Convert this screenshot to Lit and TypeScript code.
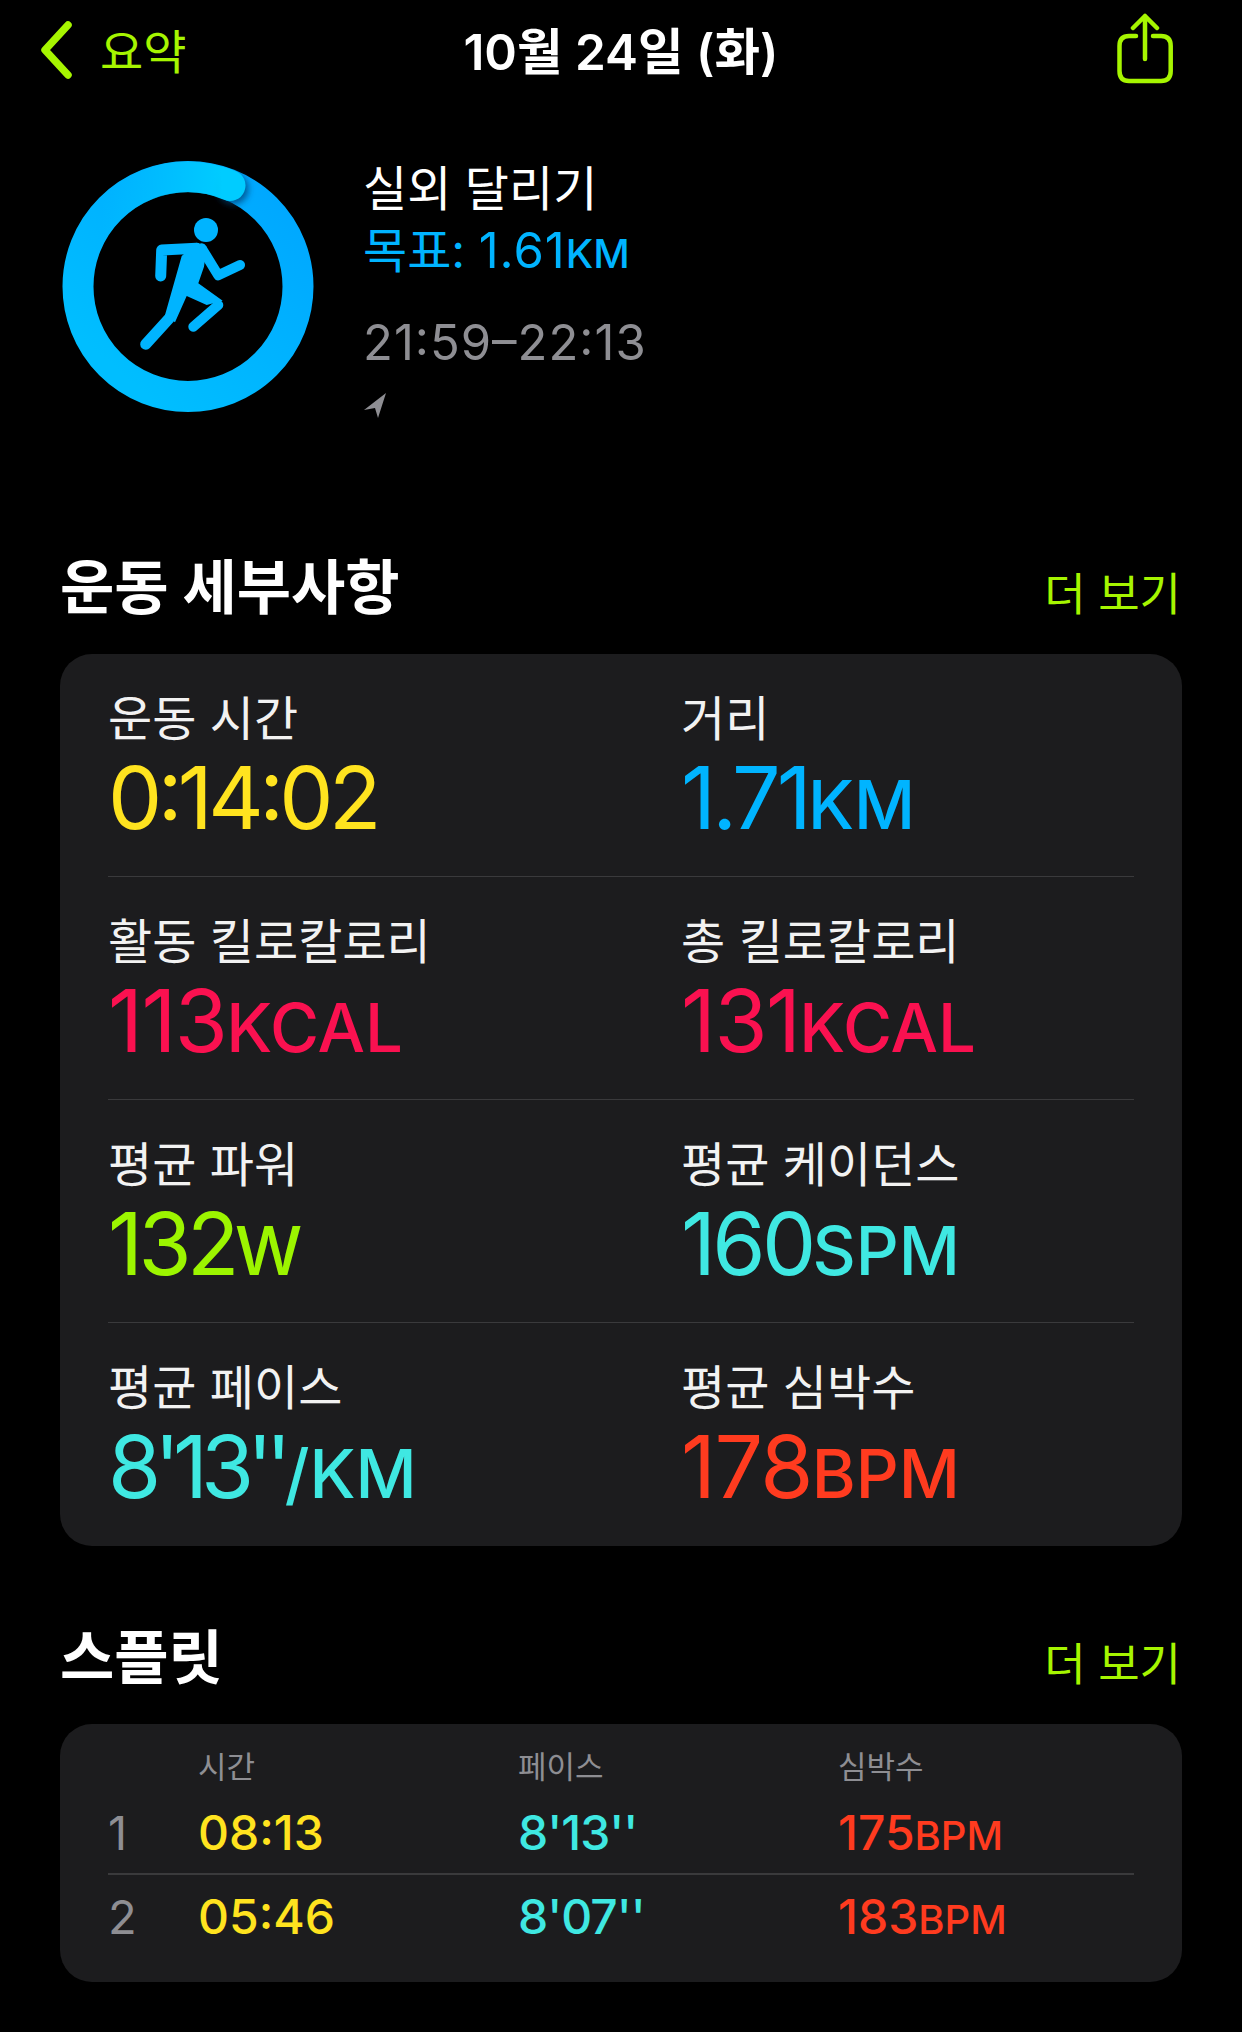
import { LitElement, html, css, svg, unsafeCSS } from 'lit';
import { customElement } from 'lit/decorators.js';

const LIME = unsafeCSS('#a6f500');
const BLUE = '#00b4ff';
const YELLOW = '#ffe31f';
const PINK = '#fa1150';
const GREEN = '#9cf500';
const CYAN = '#3fe8e2';
const RED = '#ff3b1f';

const metrics = [
  { label: '운동 시간', value: '0:14:02', unit: '', color: YELLOW, track: -4.6 },
  { label: '거리', value: '1.71', unit: 'KM', color: BLUE, track: -3.8 },
  { label: '활동 킬로칼로리', value: '113', unit: 'KCAL', color: PINK, track: -1.6 },
  { label: '총 킬로칼로리', value: '131', unit: 'KCAL', color: PINK, track: -1.6 },
  { label: '평균 파워', value: '132', unit: 'W', color: GREEN, track: -4.5 },
  { label: '평균 케이던스', value: '160', unit: 'SPM', color: CYAN, track: -3.7 },
  { label: '평균 페이스', value: `8'13''`, unit: '/KM', color: CYAN, track: -7 },
  { label: '평균 심박수', value: '178', unit: 'BPM', color: RED, track: -1.6 },
];

const splits = [
  { n: '1', time: '08:13', pace: `8'13''`, bpm: '175' },
  { n: '2', time: '05:46', pace: `8'07''`, bpm: '183' },
];

const ring = svg`
  <defs>
    <linearGradient id="ringGrad" x1="0.9" y1="0.1" x2="0.2" y2="0.9">
      <stop offset="0" stop-color="#00a8ff" />
      <stop offset="1" stop-color="#00beff" />
    </linearGradient>
    <linearGradient id="capGrad" gradientUnits="userSpaceOnUse" x1="40" y1="0" x2="160" y2="0">
      <stop offset="0" stop-color="#00ccff" stop-opacity="0" />
      <stop offset="1" stop-color="#00ccff" stop-opacity="1" />
    </linearGradient>
    <filter id="capShadow" x="-50%" y="-50%" width="200%" height="200%">
      <feGaussianBlur stdDeviation="3" />
    </filter>
  </defs>
  <circle cx="126" cy="125.5" r="110" fill="none" stroke="url(#ringGrad)" stroke-width="31" />
  <circle cx="171" cy="28" r="15.5" fill="#003a70" fill-opacity="0.7" filter="url(#capShadow)" />
  <path d="M31 70 A110 110 0 0 1 168 24.5" fill="none" stroke="url(#capGrad)" stroke-width="31" stroke-linecap="round" />
  <circle cx="144" cy="69" r="12" fill="${BLUE}" />
  <path fill="${BLUE}" d="M119.7 95 L103 154 L113 161.3 L124.7 135 L144.7 144 L160.7 139.7 L136.3 122.3 L142 105.7 L144.7 85.7 L134.7 81.7 Z" />
  <g fill="none" stroke="${BLUE}" stroke-linecap="round" stroke-linejoin="round">
    <path d="M134.7 87.3 L99.7 89 L98.7 115" stroke-width="11" />
    <path d="M139.7 87.3 L156.3 114.3 L178 104" stroke-width="10" />
    <path d="M156.3 144 L131.3 165.7" stroke-width="10" />
    <path d="M107.3 157.3 L83.7 183.3" stroke-width="11" />
  </g>
`;

@customElement('app-root')
export class AppRoot extends LitElement {
  static styles = css`
    :host {
      display: block;
      width: 1242px;
      height: 2032px;
      background: #000;
      color: #fff;
      font-family: Inter, 'Noto Sans CJK KR', sans-serif;
      overflow: hidden;
    }
    .nav {
      display: flex;
      align-items: center;
      height: 100px;
      padding: 0 40px;
    }
    .back {
      display: flex;
      align-items: center;
      gap: 27px;
      flex: 1;
      color: ${LIME};
      font-size: 47px;
    }
    .back span {
      margin-top: -4px;
    }
    .nav-title {
      font-size: 49.5px;
      font-weight: 600;
      margin-top: -4px;
    }
    .share {
      flex: 1;
      display: flex;
      justify-content: flex-end;
    }
    .share svg {
      margin-right: 29px;
    }
    .summary {
      display: flex;
      gap: 49px;
      padding: 61px 0 0 62px;
      height: 437px;
      box-sizing: border-box;
    }
    .summary-text {
      display: flex;
      flex-direction: column;
    }
    .activity {
      font-size: 48px;
      line-height: 62px;
      margin-top: -3px;
    }
    .goal {
      font-size: 48px;
      line-height: 62px;
      color: ${unsafeCSS(BLUE)};
    }
    .goal .num {
      font-size: 49px;
      letter-spacing: 1px;
    }
    .goal small {
      font-size: 40px;
      font-weight: 500;
      letter-spacing: 0;
    }
    .clock {
      font-size: 49px;
      line-height: 62px;
      letter-spacing: 1px;
      font-feature-settings: 'case';
      color: #8e8e93;
      margin-top: 27px;
    }
    .loc {
      margin-top: 18px;
    }
    .section-head {
      display: flex;
      justify-content: space-between;
      align-items: center;
      padding: 0 61px 0 60px;
      height: 100px;
      margin-bottom: 17px;
    }
    .section-head h2 {
      margin: 0 0 8px;
      font-size: 59px;
      font-weight: 700;
    }
    .section-head a {
      color: ${LIME};
      font-size: 45px;
      margin-top: 9px;
    }
    .card {
      margin: 0 60px;
      background: #1c1c1e;
      border-radius: 32px;
      padding: 0 48px;
    }
    .metrics {
      display: grid;
      grid-template-columns: 573px 1fr;
    }
    .metric {
      height: 223px;
      box-sizing: border-box;
      padding-top: 35px;
      border-bottom: 1.5px solid #3a3a3c;
    }
    .metric:nth-last-child(-n + 2) {
      border-bottom: none;
    }
    .metric .label {
      font-size: 48px;
      line-height: 60px;
      color: #f2f2f2;
    }
    .metric .value {
      font-size: 86px;
      line-height: 98px;
      font-feature-settings: 'case';
    }
    .metric .unit {
      font-size: 67px;
      font-weight: 500;
    }
    .gap {
      height: 61px;
    }
    .splits {
      display: grid;
      grid-template-columns: 90px 320px 320px 1fr;
      grid-template-rows: 68px 81px 1.5px 83px;
      padding-bottom: 24px;
    }
    .splits .hdr {
      font-size: 31px;
      line-height: 40px;
      color: #8e8e93;
      align-self: end;
      padding-bottom: 5px;
    }
    .splits .cell {
      font-size: 48px;
      font-weight: 500;
      align-self: center;
    }
    .splits .idx {
      font-size: 47px;
      color: #8e8e93;
      align-self: center;
    }
    .splits .cell small {
      font-size: 40px;
      font-weight: 500;
    }
    .splits .cyan {
      letter-spacing: -1px;
    }
    .rule {
      grid-column: 1 / -1;
      background: #3a3a3c;
    }
    .yellow {
      color: ${unsafeCSS(YELLOW)};
    }
    .cyan {
      color: ${unsafeCSS(CYAN)};
    }
    .red {
      color: ${unsafeCSS(RED)};
    }
  `;

  render() {
    return html`
      <div class="nav">
        <div class="back">
          <svg width="33" height="58" viewBox="0 0 33 58">
            <path d="M28 4 L5 29 L28 54" fill="none" stroke="#a6f500" stroke-width="7.5" stroke-linecap="round" stroke-linejoin="round" />
          </svg>
          <span>요약</span>
        </div>
        <div class="nav-title">10월 24일 (화)</div>
        <div class="share">
          <svg width="58" height="74" viewBox="0 0 58 74" fill="none" stroke="#a6f500" stroke-width="4.5" stroke-linecap="round" stroke-linejoin="round">
            <path d="M21 23 H14 Q4.5 23 4.5 33 V58 Q4.5 68 14 68 H46 Q55.7 68 55.7 58 V33 Q55.7 23 46 23 H38" />
            <path d="M30 46 V3 M18 15 L30 3 L42 15" />
          </svg>
        </div>
      </div>

      <div class="summary">
        <svg width="252" height="252" viewBox="0 0 252 252">${ring}</svg>
        <div class="summary-text">
          <div class="activity">실외 달리기</div>
          <div class="goal">목표: <span class="num">1.61<small>KM</small></span></div>
          <div class="clock">21:59–22:13</div>
          <svg class="loc" width="24" height="26" viewBox="0 0 24 26">
            <path d="M23 1 L1 18 L12 16 L15 26 Z" fill="#8e8e93" />
          </svg>
        </div>
      </div>

      <div class="section-head">
        <h2>운동 세부사항</h2>
        <a>더 보기</a>
      </div>
      <div class="card metrics">
        ${metrics.map(
          (m) => html`
            <div class="metric">
              <div class="label">${m.label}</div>
              <div class="value" style="color:${m.color}"><span style="letter-spacing:${m.track}px">${m.value}</span><span class="unit">${m.unit}</span></div>
            </div>
          `
        )}
      </div>

      <div class="gap"></div>
      <div class="section-head">
        <h2>스플릿</h2>
        <a>더 보기</a>
      </div>
      <div class="card splits">
        <div></div>
        <div class="hdr">시간</div>
        <div class="hdr">페이스</div>
        <div class="hdr">심박수</div>
        ${splits.map(
          (s, i) => html`
            ${i > 0 ? html`<div class="rule"></div>` : ''}
            <div class="idx">${s.n}</div>
            <div class="cell yellow">${s.time}</div>
            <div class="cell cyan">${s.pace}</div>
            <div class="cell red">${s.bpm}<small>BPM</small></div>
          `
        )}
      </div>
    `;
  }
}
